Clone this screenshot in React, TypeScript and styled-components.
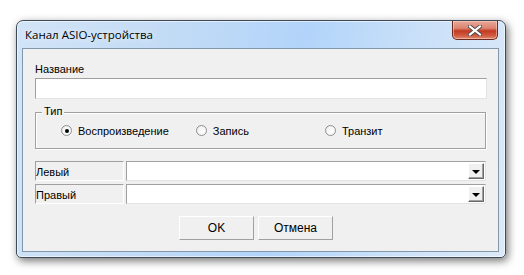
import React from "react";
import styled, { createGlobalStyle } from "styled-components";

const Global = createGlobalStyle`
  html, body { margin: 0; padding: 0; background: #ffffff; }
  body { width: 524px; height: 275px; overflow: hidden; font-family: "Liberation Sans", Arial, sans-serif; font-size: 11px; color: #000; }
  #root { padding: 20px 0 0 16px; }
`;

const Window = styled.div`
  width: 490px;
  height: 238px;
  box-sizing: border-box;
  border: 1px solid #3e4a58;
  border-radius: 7px 7px 5px 5px;
  background: linear-gradient(100deg, #d2e4f7 0%, #c2dbf5 30%, #b2d4fa 55%, #cde2f8 80%, #dbe9f8 100%);
  box-shadow: 2px 3px 9px rgba(0, 0, 0, 0.55), inset 0 0 0 1px rgba(255, 255, 255, 0.55);
  display: flex;
  flex-direction: column;
`;

const TitleBar = styled.div`
  height: 27px;
  display: flex;
  align-items: flex-start;
  padding-left: 8px;
  padding-right: 7px;
`;

const Title = styled.div`
  font-family: "Open Sans", "Noto Sans", sans-serif;
  font-size: 11.5px;
  line-height: 16px;
  margin-top: 6px;
  color: #000;
  text-shadow: 0 0 6px rgba(255, 255, 255, 0.9);
`;

const CloseButton = styled.div`
  margin-left: auto;
  width: 46px;
  height: 19px;
  box-sizing: border-box;
  border: 1px solid #6e2a20;
  border-top: none;
  border-radius: 0 0 5px 5px;
  background: linear-gradient(#e9a797 0%, #dc8470 40%, #c23a22 55%, #cf5a40 80%, #e08a70 100%);
  box-shadow: inset 0 0 0 1px rgba(255, 220, 210, 0.5);
  display: flex;
  align-items: center;
  justify-content: center;
`;

const ClientWrap = styled.div`
  flex: 1;
  display: flex;
  padding: 0 6px 5px 5px;
`;

const Client = styled.div`
  flex: 1;
  border: 1px solid #8496aa;
  background: #f0f0f0;
  padding: 14px 11px 0 12px;
  display: flex;
  flex-direction: column;
`;

const Label = styled.div`
  height: 13px;
  line-height: 13px;
`;

const TextInput = styled.div`
  margin-top: 2px;
  height: 21px;
  box-sizing: border-box;
  background: #fff;
  border: 1px solid #e3e3e3;
  border-top-color: #a0a0a0;
  border-left-color: #a0a0a0;
`;

const GroupBox = styled.div`
  position: relative;
  margin: 13px 1px 0 0;
  height: 37px;
  box-sizing: border-box;
  border: 1px solid #a0a0a0;
  box-shadow: inset 1px 1px 0 #fff, 1px 1px 0 #fff;
  display: flex;
  align-items: center;
`;

const Legend = styled.div`
  position: absolute;
  left: 6px;
  top: -8px;
  padding: 0 2px;
  line-height: 13px;
  background: #f0f0f0;
`;

const RadioItem = styled.div<{ $x: number }>`
  display: flex;
  align-items: center;
  gap: 6px;
  margin-left: ${(p) => p.$x}px;
`;

const RadioCircle = styled.span<{ $on?: boolean }>`
  width: 11px;
  height: 11px;
  box-sizing: border-box;
  border-radius: 50%;
  border: 1px solid #8f8f8f;
  background: radial-gradient(circle at 60% 60%, #ffffff 0%, #f4f4f4 60%, #d8d8d8 100%);
  display: flex;
  align-items: center;
  justify-content: center;
  &::after {
    content: "";
    width: 4px;
    height: 4px;
    border-radius: 50%;
    background: ${(p) => (p.$on ? "#000" : "transparent")};
  }
`;

const Rows = styled.div`
  margin-top: 12px;
  display: flex;
  flex-direction: column;
  gap: 3px;
`;

const Row = styled.div`
  display: flex;
  height: 20px;
  gap: 2px;
`;

const RowLabel = styled.div`
  width: 89px;
  box-sizing: border-box;
  border-top: 1px solid #a0a0a0;
  border-left: 1px solid #a0a0a0;
  border-right: 1px solid #fff;
  border-bottom: 1px solid #fff;
  display: flex;
  align-items: flex-end;
  line-height: 14px;
  padding-bottom: 1px;
  color: #000;
`;

const Combo = styled.div`
  flex: 1;
  box-sizing: border-box;
  background: #fff;
  border: 1px solid #a0a0a0;
  border-right-color: #e3e3e3;
  border-bottom-color: #e3e3e3;
  display: flex;
  justify-content: flex-end;
  padding: 1px 1px 1px 0;
  margin-right: 1px;
`;

const DropButton = styled.div`
  width: 16px;
  box-sizing: border-box;
  background: #f0f0f0;
  border: 1px solid #fff;
  border-right-color: #696969;
  border-bottom-color: #696969;
  box-shadow: inset -1px -1px 0 #a0a0a0;
  display: flex;
  align-items: center;
  justify-content: center;
  &::after {
    content: "";
    border-left: 4px solid transparent;
    border-right: 4px solid transparent;
    border-top: 4px solid #000;
    margin-top: 1px;
  }
`;

const Buttons = styled.div`
  margin-top: 12px;
  display: flex;
  justify-content: center;
  gap: 4px;
  padding-right: 10px;
`;

const Button = styled.div`
  width: 75px;
  height: 24px;
  box-sizing: border-box;
  background: #f0f0f0;
  border: 1px solid #fff;
  border-right-color: #a0a0a0;
  border-bottom-color: #a0a0a0;
  display: flex;
  align-items: center;
  justify-content: center;
  font-size: 12px;
`;

export default function App() {
  return (
    <>
      <Global />
      <Window>
        <TitleBar>
          <Title>Канал ASIO-устройства</Title>
          <CloseButton>
            <svg width="14" height="11" viewBox="0 0 14 11">
              <path d="M2 1.5 L12 9.5 M12 1.5 L2 9.5" stroke="#4a4a4a" strokeWidth="4" strokeLinecap="square" />
              <path d="M2 1.5 L12 9.5 M12 1.5 L2 9.5" stroke="#ffffff" strokeWidth="2.2" strokeLinecap="square" />
            </svg>
          </CloseButton>
        </TitleBar>
        <ClientWrap>
          <Client>
            <Label>Название</Label>
            <TextInput />
            <GroupBox>
              <Legend>Тип</Legend>
              <RadioItem $x={25}>
                <RadioCircle $on />
                Воспроизведение
              </RadioItem>
              <RadioItem $x={27}>
                <RadioCircle />
                Запись
              </RadioItem>
              <RadioItem $x={76}>
                <RadioCircle />
                Транзит
              </RadioItem>
            </GroupBox>
            <Rows>
              <Row>
                <RowLabel>Левый</RowLabel>
                <Combo>
                  <DropButton />
                </Combo>
              </Row>
              <Row>
                <RowLabel>Правый</RowLabel>
                <Combo>
                  <DropButton />
                </Combo>
              </Row>
            </Rows>
            <Buttons>
              <Button>OK</Button>
              <Button>Отмена</Button>
            </Buttons>
          </Client>
        </ClientWrap>
      </Window>
    </>
  );
}
